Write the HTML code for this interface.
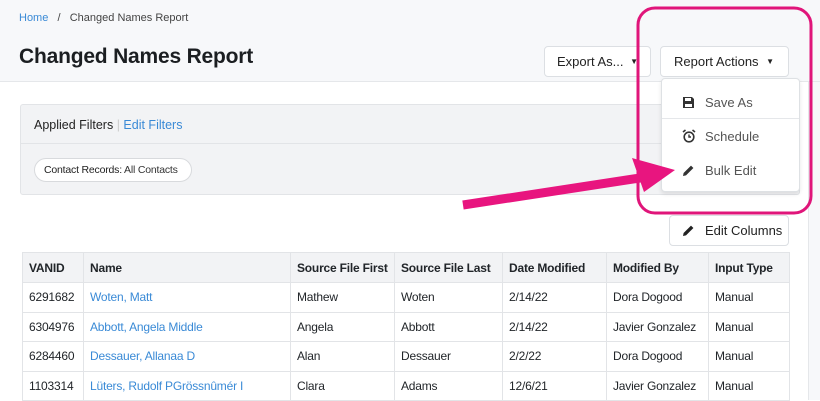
<!DOCTYPE html>
<html><head><style>
*{box-sizing:border-box;margin:0;padding:0}
body{width:820px;height:400px;overflow:hidden;background:#fff;font-family:"Liberation Sans",sans-serif;color:#212529;position:relative;font-size:13px}
.hdr{position:absolute;left:0;top:0;width:820px;height:82px;background:#f7f8fa;border-bottom:1px solid #e5e7ea}
.bc{position:absolute;left:19px;top:12px;font-size:11px;color:#444}
.bc a{color:#3a8ad6}
h1{position:absolute;left:19px;top:45px;font-size:21px;font-weight:bold;color:#1b1e21;letter-spacing:-0.2px}
.rs{position:absolute;left:808px;top:82px;width:12px;height:318px;background:#f7f8fa;border-left:1px solid #e5e7ea}
.btn{position:absolute;background:#fff;border:1px solid #dcdfe3;border-radius:4px;font-size:13px;color:#222;display:flex;align-items:center}
.filt{position:absolute;left:20px;top:104px;width:780px;height:91px;background:#f2f3f5;border:1px solid #e2e4e7;border-radius:3px}
.filt .top{height:39px;border-bottom:1px solid #e2e4e7;padding:13px 0 0 13px;font-size:12.5px}
.pill{position:absolute;left:13px;top:53px;width:158px;height:24px;border:1px solid #d8dadd;border-radius:12px;background:#fff;font-size:10.5px;padding:5px 0 0 9px;color:#333;white-space:nowrap;letter-spacing:-0.2px}
.dd{position:absolute;left:661px;top:78px;width:139px;height:114px;background:#fff;border:1px solid #dee1e4;border-radius:4px;box-shadow:0 2px 4px rgba(0,0,0,.1)}
.it{position:absolute;left:0;width:137px;font-size:13px;color:#555;padding-left:43px}
.it svg{position:absolute;left:20px}
table{position:absolute;left:22px;top:252px;border-collapse:collapse;font-size:12px;table-layout:fixed;width:767px;letter-spacing:-0.2px}
td,th{border:1px solid #e2e4e7;padding:0 6px;height:29.5px;text-align:left;white-space:nowrap;overflow:hidden}
th{background:#f2f3f5;font-weight:bold;height:30px}
td a{color:#3a8ad6}
</style></head><body>
<div class="hdr">
<div class="bc"><a>Home</a>&nbsp;&nbsp;&nbsp;/&nbsp;&nbsp;&nbsp;Changed Names Report</div>
<h1>Changed Names Report</h1>
</div>
<div class="rs"></div>
<div class="btn" style="left:544px;top:46px;width:107px;height:31px;padding-left:12px">Export As...<span style="position:absolute;right:12px;font-size:8px">▼</span></div>
<div class="btn" style="left:660px;top:46px;width:129px;height:31px;padding-left:13px">Report Actions<span style="position:absolute;right:14px;font-size:8px">▼</span></div>
<div class="filt"><div class="top"><b style="font-weight:normal;color:#222">Applied Filters</b> <span style="color:#ccc">|</span> <span style="color:#3a8ad6">Edit Filters</span></div>
<div class="pill"><span style="color:#222">Contact Records:</span> All Contacts</div></div>
<div class="dd">
<div class="it" style="top:16px"><svg width="13" height="13" viewBox="0 0 13 13" style="top:1px"><path d="M1 1h9l2 2v9H1z" fill="#333"/><rect x="3" y="2" width="6" height="3" fill="#fff"/><rect x="3" y="8" width="7" height="3" fill="#fff"/></svg>Save As</div>
<div style="position:absolute;left:0;top:39px;width:137px;border-top:1px solid #e5e7ea"></div>
<div class="it" style="top:50px"><svg width="14" height="14" viewBox="0 0 14 14" style="top:0"><circle cx="7" cy="8" r="4.8" fill="none" stroke="#333" stroke-width="1.6"/><path d="M7 5.5V8h2" stroke="#333" stroke-width="1.4" fill="none"/><path d="M1 3l2.5-2M13 3l-2.5-2" stroke="#333" stroke-width="1.6"/></svg>Schedule</div>
<div class="it" style="top:84px"><svg width="13" height="13" viewBox="0 0 13 13" style="top:1px"><path d="M1 12l.6-3L9 1.6l2.4 2.4L4 11.4z" fill="#333"/></svg>Bulk Edit</div>
</div>
<div class="btn" style="left:669px;top:215px;width:120px;height:31px;padding-left:35px">
<svg width="13" height="13" viewBox="0 0 13 13" style="position:absolute;left:12px;top:8px"><path d="M1 12l.6-3L9 1.6l2.4 2.4L4 11.4z" fill="#222"/></svg>Edit Columns</div>
<table>
<colgroup><col style="width:61px"><col style="width:207px"><col style="width:104px"><col style="width:108px"><col style="width:104px"><col style="width:102px"><col style="width:81px"></colgroup>
<tr><th>VANID</th><th>Name</th><th>Source File First</th><th>Source File Last</th><th>Date Modified</th><th>Modified By</th><th>Input Type</th></tr>
<tr><td>6291682</td><td><a>Woten, Matt</a></td><td>Mathew</td><td>Woten</td><td>2/14/22</td><td>Dora Dogood</td><td>Manual</td></tr>
<tr><td>6304976</td><td><a>Abbott, Angela Middle</a></td><td>Angela</td><td>Abbott</td><td>2/14/22</td><td>Javier Gonzalez</td><td>Manual</td></tr>
<tr><td>6284460</td><td><a>Dessauer, Allanaa D</a></td><td>Alan</td><td>Dessauer</td><td>2/2/22</td><td>Dora Dogood</td><td>Manual</td></tr>
<tr><td>1103314</td><td><a>Lüters, Rudolf PGrössnûmér I</a></td><td>Clara</td><td>Adams</td><td>12/6/21</td><td>Javier Gonzalez</td><td>Manual</td></tr>
</table>
<svg width="820" height="400" style="position:absolute;left:0;top:0">
<rect x="638" y="8" width="173" height="205" rx="17" fill="none" stroke="#e0157a" stroke-width="3"/>
<path d="M463 205L640 178" stroke="#e8157f" stroke-width="9"/>
<path d="M632 158L675 170L644 192z" fill="#e8157f"/>
</svg>
</body></html>
